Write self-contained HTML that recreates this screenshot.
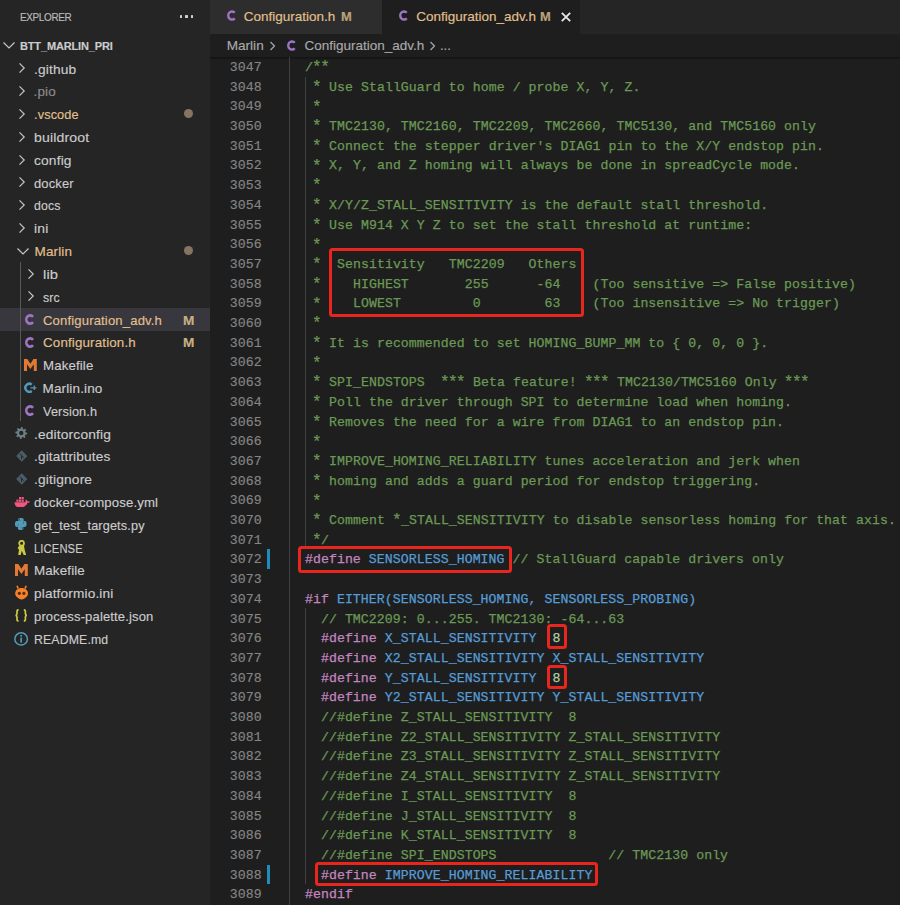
<!DOCTYPE html>
<html><head><meta charset="utf-8"><style>
*{margin:0;padding:0;box-sizing:border-box}
html,body{width:900px;height:905px;overflow:hidden;background:#1e1e1e}
body{position:relative;font-family:"Liberation Sans",sans-serif;-webkit-text-stroke:0.15px}
.ab{position:absolute}
#side{position:absolute;left:0;top:0;width:210px;height:905px;background:#252526}
.row{position:absolute;left:0;width:210px;height:22.81px;line-height:22.81px;font-size:13px;color:#cccccc;white-space:nowrap}
.row .t{position:absolute;top:1.7px;letter-spacing:0.15px;font-size:13.5px}
.chev{position:absolute;width:16px;height:16px}
.ln{position:absolute;left:210.7px;width:51px;text-align:right;font-family:"Liberation Mono",monospace;font-size:13.2px;letter-spacing:0.07px;color:#858585;height:19.7px;line-height:19.7px;white-space:pre}
.cl{position:absolute;left:289px;font-family:"Liberation Mono",monospace;font-size:13.2px;letter-spacing:0.07px;height:19.7px;line-height:19.7px;white-space:pre;color:#d4d4d4;-webkit-text-stroke:0.25px}
.c{color:#6a9955}.st{font-size:16px;letter-spacing:-1.53px;position:relative;left:-0.9px;top:1.3px}.k{color:#c586c0}.m{color:#569cd6}.n{color:#b5cea8}
.box{position:absolute;border:3.8px solid #e8261e;border-radius:3.5px}
.guide{position:absolute;width:1px;background:#404040}
</style></head><body>

<div id="side">
<div class="ab" style="left:20px;top:9px;font-size:11px;color:#bbbbbb;letter-spacing:-0.4px;line-height:16px;transform:scaleX(0.906);transform-origin:0 0">EXPLORER</div>
<div class="ab" style="left:179.8px;top:15.1px;width:2.6px;height:2.8px;border-radius:0.6px;background:#d0d0d0"></div>
<div class="ab" style="left:185.2px;top:15.1px;width:2.6px;height:2.8px;border-radius:0.6px;background:#d0d0d0"></div>
<div class="ab" style="left:190.6px;top:15.1px;width:2.6px;height:2.8px;border-radius:0.6px;background:#d0d0d0"></div>
<div class="row" style="top:34.1px;">
<svg class="chev" style="left:1px;top:3.4px" viewBox="0 0 16 16"><path d="M2.5 5.5 L8 11 L13.5 5.5" fill="none" stroke="#c5c5c5" stroke-width="1.2"/></svg>
<div class="t" style="left:20px;top:0.7px;font-weight:bold;font-size:11px;letter-spacing:-0.15px">BTT_MARLIN_PRI</div>
</div>
<div class="row" style="top:56.91px;">
<svg class="chev" style="left:14.3px;top:3.4px" viewBox="0 0 16 16"><path d="M5.5 3.3 L10.2 8 L5.5 12.7" fill="none" stroke="#c5c5c5" stroke-width="1.2"/></svg>
<div class="t" style="left:33.5px;color:#cccccc;transform:scaleX(1.017);transform-origin:0 0;">.github</div>
</div>
<div class="row" style="top:79.72px;">
<svg class="chev" style="left:14.3px;top:3.4px" viewBox="0 0 16 16"><path d="M5.5 3.3 L10.2 8 L5.5 12.7" fill="none" stroke="#c5c5c5" stroke-width="1.2"/></svg>
<div class="t" style="left:33.5px;color:#8c8c8c;transform:scaleX(1);transform-origin:0 0;">.pio</div>
</div>
<div class="row" style="top:102.53px;">
<svg class="chev" style="left:14.3px;top:3.4px" viewBox="0 0 16 16"><path d="M5.5 3.3 L10.2 8 L5.5 12.7" fill="none" stroke="#c5c5c5" stroke-width="1.2"/></svg>
<div class="t" style="left:33.5px;color:#e2c08d;transform:scaleX(0.94);transform-origin:0 0;">.vscode</div>
<div class="ab" style="left:183.8px;top:6.9px;width:9px;height:9px;border-radius:50%;background:#857560"></div>
</div>
<div class="row" style="top:125.34px;">
<svg class="chev" style="left:14.3px;top:3.4px" viewBox="0 0 16 16"><path d="M5.5 3.3 L10.2 8 L5.5 12.7" fill="none" stroke="#c5c5c5" stroke-width="1.2"/></svg>
<div class="t" style="left:33.5px;color:#cccccc;transform:scaleX(1.04);transform-origin:0 0;">buildroot</div>
</div>
<div class="row" style="top:148.15px;">
<svg class="chev" style="left:14.3px;top:3.4px" viewBox="0 0 16 16"><path d="M5.5 3.3 L10.2 8 L5.5 12.7" fill="none" stroke="#c5c5c5" stroke-width="1.2"/></svg>
<div class="t" style="left:33.5px;color:#cccccc;transform:scaleX(1.02);transform-origin:0 0;">config</div>
</div>
<div class="row" style="top:170.96px;">
<svg class="chev" style="left:14.3px;top:3.4px" viewBox="0 0 16 16"><path d="M5.5 3.3 L10.2 8 L5.5 12.7" fill="none" stroke="#c5c5c5" stroke-width="1.2"/></svg>
<div class="t" style="left:33.5px;color:#cccccc;transform:scaleX(0.96);transform-origin:0 0;">docker</div>
</div>
<div class="row" style="top:193.77px;">
<svg class="chev" style="left:14.3px;top:3.4px" viewBox="0 0 16 16"><path d="M5.5 3.3 L10.2 8 L5.5 12.7" fill="none" stroke="#c5c5c5" stroke-width="1.2"/></svg>
<div class="t" style="left:33.5px;color:#cccccc;transform:scaleX(0.91);transform-origin:0 0;">docs</div>
</div>
<div class="row" style="top:216.58px;">
<svg class="chev" style="left:14.3px;top:3.4px" viewBox="0 0 16 16"><path d="M5.5 3.3 L10.2 8 L5.5 12.7" fill="none" stroke="#c5c5c5" stroke-width="1.2"/></svg>
<div class="t" style="left:33.5px;color:#cccccc;transform:scaleX(1.03);transform-origin:0 0;">ini</div>
</div>
<div class="row" style="top:239.39px;">
<svg class="chev" style="left:15px;top:3.4px" viewBox="0 0 16 16"><path d="M2.5 5.5 L8 11 L13.5 5.5" fill="none" stroke="#c5c5c5" stroke-width="1.2"/></svg>
<div class="t" style="left:34.5px;color:#e2c08d;transform:scaleX(1);transform-origin:0 0;">Marlin</div>
<div class="ab" style="left:183.8px;top:6.9px;width:9px;height:9px;border-radius:50%;background:#857560"></div>
</div>
<div class="row" style="top:262.2px;">
<svg class="chev" style="left:23.3px;top:3.4px" viewBox="0 0 16 16"><path d="M5.5 3.3 L10.2 8 L5.5 12.7" fill="none" stroke="#c5c5c5" stroke-width="1.2"/></svg>
<div class="t" style="left:42.5px;color:#cccccc;transform:scaleX(1.09);transform-origin:0 0;">lib</div>
</div>
<div class="row" style="top:285.01px;">
<svg class="chev" style="left:23.3px;top:3.4px" viewBox="0 0 16 16"><path d="M5.5 3.3 L10.2 8 L5.5 12.7" fill="none" stroke="#c5c5c5" stroke-width="1.2"/></svg>
<div class="t" style="left:42.5px;color:#cccccc;transform:scaleX(0.91);transform-origin:0 0;">src</div>
</div>
<div class="row" style="top:307.82px;background:#37373d;">
<svg class="ab" style="left:25.2px;top:6.1px" width="10" height="11" viewBox="0 0 10 11"><path d="M8 2.86 A3.8 4.1 0 1 0 8 8.14" fill="none" stroke="#a074c4" stroke-width="2.6"/></svg>
<div class="t" style="left:42.5px;color:#e2c08d;transform:scaleX(0.97);transform-origin:0 0;">Configuration_adv.h</div>
<div class="t" style="left:182.8px;color:#c9ae80;font-size:12.4px;font-weight:bold;letter-spacing:0;transform:scaleX(1.1);transform-origin:0 0">M</div>
</div>
<div class="row" style="top:330.63px;">
<svg class="ab" style="left:25.2px;top:6.1px" width="10" height="11" viewBox="0 0 10 11"><path d="M8 2.86 A3.8 4.1 0 1 0 8 8.14" fill="none" stroke="#a074c4" stroke-width="2.6"/></svg>
<div class="t" style="left:42.5px;color:#e2c08d;transform:scaleX(0.99);transform-origin:0 0;">Configuration.h</div>
<div class="t" style="left:182.8px;color:#c9ae80;font-size:12.4px;font-weight:bold;letter-spacing:0;transform:scaleX(1.1);transform-origin:0 0">M</div>
</div>
<div class="row" style="top:353.44px;">
<svg class="ab" style="left:23.8px;top:5.1px" width="12.8" height="12" viewBox="0 0 12.8 12"><polygon fill="#e37933" points="0,12 0,0 3.3,0 6.4,4.8 9.5,0 12.8,0 12.8,12 9.8,12 9.8,5.3 6.4,10 3,5.3 3,12"/></svg>
<div class="t" style="left:42.5px;color:#cccccc;transform:scaleX(0.98);transform-origin:0 0;">Makefile</div>
</div>
<div class="row" style="top:376.25px;">
<svg class="ab" style="left:24px;top:5.4px" width="12.7" height="11.6" viewBox="0 0 12.7 11.6"><path d="M7.8 2.6 A4 4 0 1 0 7.8 9" fill="none" stroke="#519aba" stroke-width="2.4"/><path d="M6.5 5.8H12.5M10.3 3.6V8" stroke="#519aba" stroke-width="1.3"/></svg>
<div class="t" style="left:42.5px;color:#cccccc;transform:scaleX(1);transform-origin:0 0;">Marlin.ino</div>
</div>
<div class="row" style="top:399.06px;">
<svg class="ab" style="left:25.2px;top:6.1px" width="10" height="11" viewBox="0 0 10 11"><path d="M8 2.86 A3.8 4.1 0 1 0 8 8.14" fill="none" stroke="#a074c4" stroke-width="2.6"/></svg>
<div class="t" style="left:42.5px;color:#cccccc;transform:scaleX(0.94);transform-origin:0 0;">Version.h</div>
</div>
<div class="row" style="top:421.87px;">
<svg class="ab" style="left:15.2px;top:5.3px" width="12.5" height="12" viewBox="0 0 12.5 12"><path fill="#6d8086" d="M6.25,0.00 L7.42,0.12 L7.90,2.03 L8.64,2.42 L10.49,1.76 L11.24,2.67 L10.22,4.35 L10.47,5.16 L12.25,6.00 L12.13,7.17 L10.22,7.65 L9.83,8.39 L10.49,10.24 L9.58,10.99 L7.90,9.97 L7.09,10.22 L6.25,12.00 L5.08,11.88 L4.60,9.97 L3.86,9.58 L2.01,10.24 L1.26,9.33 L2.28,7.65 L2.03,6.84 L0.25,6.00 L0.37,4.83 L2.28,4.35 L2.67,3.61 L2.01,1.76 L2.92,1.01 L4.60,2.03 L5.41,1.78Z"/><circle cx="6.25" cy="6" r="2.2" fill="#252526"/></svg>
<div class="t" style="left:34px;color:#cccccc;transform:scaleX(1.02);transform-origin:0 0;">.editorconfig</div>
</div>
<div class="row" style="top:444.68px;">
<svg class="ab" style="left:15.5px;top:5.4px" width="11.5" height="12" viewBox="0 0 11.5 12"><path fill="#4a5d67" d="M5.75 0.2L11.3 6 5.75 11.8 0.2 6z"/><path d="M4 3.8L7.6 7.6M5.6 5.3V9.2" stroke="#252526" stroke-width="1" fill="none"/></svg>
<div class="t" style="left:34px;color:#cccccc;transform:scaleX(1.01);transform-origin:0 0;">.gitattributes</div>
</div>
<div class="row" style="top:467.49px;">
<svg class="ab" style="left:15.5px;top:5.4px" width="11.5" height="12" viewBox="0 0 11.5 12"><path fill="#4a5d67" d="M5.75 0.2L11.3 6 5.75 11.8 0.2 6z"/><path d="M4 3.8L7.6 7.6M5.6 5.3V9.2" stroke="#252526" stroke-width="1" fill="none"/></svg>
<div class="t" style="left:34px;color:#cccccc;transform:scaleX(1.02);transform-origin:0 0;">.gitignore</div>
</div>
<div class="row" style="top:490.3px;">
<svg class="ab" style="left:13.5px;top:6.3px" width="16.2" height="10.8" viewBox="0 0 16.2 10.8"><path fill="#f0567e" d="M0.5 5.2H11.2C11.6 4.2 11.8 3.2 11.6 2.2 12.7 2.6 13.3 3.6 13.4 4.5 14.3 4 15.4 4.1 16 4.5 15.6 5.4 14.6 5.9 13.5 5.8 12.6 8.8 9.8 10.6 5.8 10.6 2.6 10.6 0.6 8.6 0.5 5.2Z"/><rect x="2.4" y="2.6" width="2.2" height="2.2" fill="#f0567e"/><rect x="5" y="2.6" width="2.2" height="2.2" fill="#f0567e"/><rect x="7.6" y="2.6" width="2.2" height="2.2" fill="#f0567e"/><rect x="5" y="0" width="2.2" height="2.2" fill="#f0567e"/><rect x="7.6" y="0" width="2.2" height="2.2" fill="#f0567e"/></svg>
<div class="t" style="left:34px;color:#cccccc;transform:scaleX(0.976);transform-origin:0 0;">docker-compose.yml</div>
</div>
<div class="row" style="top:513.11px;">
<svg class="ab" style="left:15.4px;top:5.1px" width="11.6" height="12" viewBox="0 0 11.6 12"><path fill="#519aba" d="M5.8 0C3 0 3.2 1.3 3.2 1.3V2.7H5.9V3.1H2.1S0 2.9 0 6 1.6 9 1.6 9H2.8V7.5S2.7 5.9 4.4 5.9H7.2S8.7 5.9 8.7 4.4V1.6S9 0 5.8 0ZM4.3 .8A.5.5 0 1 1 4.3 1.8.5.5 0 0 1 4.3.8Z"/><path fill="#519aba" d="M5.8 12C8.6 12 8.4 10.7 8.4 10.7V9.3H5.7V8.9H9.5S11.6 9.1 11.6 6 10 3 10 3H8.8V4.5S8.9 6.1 7.2 6.1H4.4S2.9 6.1 2.9 7.6V10.4S2.6 12 5.8 12ZM7.3 11.2A.5.5 0 1 1 7.3 10.2.5.5 0 0 1 7.3 11.2Z"/></svg>
<div class="t" style="left:34px;color:#cccccc;transform:scaleX(0.94);transform-origin:0 0;">get_test_targets.py</div>
</div>
<div class="row" style="top:535.92px;">
<svg class="ab" style="left:17px;top:3.6px" width="9.2" height="15.5" viewBox="0 0 9.2 15.5"><circle cx="4.6" cy="3.2" r="2.4" fill="none" stroke="#cbcb41" stroke-width="1.8"/><path fill="#cbcb41" d="M2.2 5.6H7L7.6 9.5 9.2 15.3H6.8L4.8 10.8 3.6 15.3H1.2L2 9.5 0.6 8.2Z"/></svg>
<div class="t" style="left:34px;color:#cccccc;transform:scaleX(0.83);transform-origin:0 0;">LICENSE</div>
</div>
<div class="row" style="top:558.73px;">
<svg class="ab" style="left:15.3px;top:5.1px" width="12.8" height="12" viewBox="0 0 12.8 12"><polygon fill="#e37933" points="0,12 0,0 3.3,0 6.4,4.8 9.5,0 12.8,0 12.8,12 9.8,12 9.8,5.3 6.4,10 3,5.3 3,12"/></svg>
<div class="t" style="left:34px;color:#cccccc;transform:scaleX(0.99);transform-origin:0 0;">Makefile</div>
</div>
<div class="row" style="top:581.54px;">
<svg class="ab" style="left:15.4px;top:3.9px" width="13.2" height="14.7" viewBox="0 0 13.2 14.7"><path fill="#f5822a" d="M6.6 3C10.2 3 13 5.3 13 8.4 13 11.2 10 13.6 6.6 14.6 3.2 13.6 0.2 11.2 0.2 8.4 0.2 5.3 3 3 6.6 3Z"/><path d="M3.2 3.6L2 0.8M10 3.6L11.2 0.8" stroke="#f5822a" stroke-width="1.6"/><circle cx="4.3" cy="8.3" r="1.6" fill="#5a2a10"/><circle cx="8.9" cy="8.3" r="1.6" fill="#5a2a10"/></svg>
<div class="t" style="left:34px;color:#cccccc;transform:scaleX(1.01);transform-origin:0 0;">platformio.ini</div>
</div>
<div class="row" style="top:604.35px;">
<svg class="ab" style="left:15.4px;top:4.7px" width="12.4" height="12.8" viewBox="0 0 12.4 12.8"><path d="M3.6 0.8C2.2 0.8 2 1.5 2 2.6V4.8C2 5.8 1.6 6.2 0.6 6.4 1.6 6.6 2 7 2 8V10.2C2 11.3 2.2 12 3.6 12M8.8 0.8C10.2 0.8 10.4 1.5 10.4 2.6V4.8C10.4 5.8 10.8 6.2 11.8 6.4 10.8 6.6 10.4 7 10.4 8V10.2C10.4 11.3 10.2 12 8.8 12" fill="none" stroke="#cbcb41" stroke-width="1.7"/></svg>
<div class="t" style="left:34px;color:#cccccc;transform:scaleX(0.965);transform-origin:0 0;">process-palette.json</div>
</div>
<div class="row" style="top:627.16px;">
<svg class="ab" style="left:14.3px;top:4.7px" width="14.3" height="13.9" viewBox="0 0 14.3 13.9"><ellipse cx="7.15" cy="6.95" rx="6.3" ry="6.1" fill="none" stroke="#519aba" stroke-width="1.5"/><rect x="6.3" y="5.6" width="1.7" height="5" fill="#519aba"/><rect x="6.3" y="3" width="1.7" height="1.6" fill="#519aba"/></svg>
<div class="t" style="left:34px;color:#cccccc;transform:scaleX(0.91);transform-origin:0 0;">README.md</div>
</div>
<div class="guide" style="left:20px;top:262.2px;height:159px;background:#585858"></div>
</div>
<div class="ab" style="left:210px;top:0;width:690px;height:34px;background:#252526"></div>
<div class="ab" style="left:210px;top:0;width:172px;height:34px;background:#2d2d2d"></div>
<div class="ab" style="left:382px;top:0;width:198px;height:34px;background:#1e1e1e"></div>
<svg class="ab" style="left:226.7px;top:9.9px" width="9.5" height="11" viewBox="0 0 9.5 11"><path d="M7.66 2.86 A3.6 4.1 0 1 0 7.66 8.14" fill="none" stroke="#a074c4" stroke-width="2.5"/></svg>
<div class="ab" style="left:243.8px;top:8px;font-size:13.5px;color:#e2c08d;line-height:18px;white-space:nowrap">Configuration.h</div>
<div class="ab" style="left:340.8px;top:7.6px;font-size:12px;font-weight:bold;color:#bba37a;line-height:18px;transform:scaleX(1.08);transform-origin:0 0">M</div>
<svg class="ab" style="left:398.6px;top:9.9px" width="9.5" height="11" viewBox="0 0 9.5 11"><path d="M7.66 2.86 A3.6 4.1 0 1 0 7.66 8.14" fill="none" stroke="#a074c4" stroke-width="2.5"/></svg>
<div class="ab" style="left:416.2px;top:8px;font-size:13.5px;color:#e2c08d;line-height:18px;white-space:nowrap">Configuration_adv.h</div>
<div class="ab" style="left:540.3px;top:7.6px;font-size:12px;font-weight:bold;color:#bba37a;line-height:18px;transform:scaleX(1.08);transform-origin:0 0">M</div>
<svg class="ab" style="left:560.5px;top:11.5px" width="10" height="10" viewBox="0 0 10 10"><path d="M0.8 0.8L9.2 9.2M9.2 0.8L0.8 9.2" stroke="#e8e8e8" stroke-width="1.8"/></svg>
<div class="ab" style="left:226.7px;top:37px;font-size:13.6px;color:#a9a9a9;line-height:18px;white-space:nowrap">Marlin</div>
<svg class="ab" style="left:266.5px;top:39px" width="12" height="14" viewBox="0 0 12 14"><path d="M3.5 3L7.5 7 3.5 11" fill="none" stroke="#a9a9a9" stroke-width="1.2"/></svg>
<svg class="ab" style="left:286.6px;top:40.4px" width="9.5" height="11" viewBox="0 0 9.5 11"><path d="M7.66 2.86 A3.6 4.1 0 1 0 7.66 8.14" fill="none" stroke="#a074c4" stroke-width="2.5"/></svg>
<div class="ab" style="left:304.4px;top:37px;font-size:13.5px;color:#a9a9a9;line-height:18px;white-space:nowrap">Configuration_adv.h</div>
<svg class="ab" style="left:427px;top:39px" width="12" height="14" viewBox="0 0 12 14"><path d="M3.5 3L7.5 7 3.5 11" fill="none" stroke="#a9a9a9" stroke-width="1.2"/></svg>
<div class="ab" style="left:440px;top:37px;font-size:13px;color:#a9a9a9;line-height:18px">...</div>
<div class="ab" style="left:210px;top:57px;width:690px;height:3px;background:linear-gradient(#121212,rgba(30,30,30,0))"></div>
<div class="guide" style="left:289px;top:57px;height:848px"></div>
<div class="ln" style="top:57.95px">3047</div>
<div class="cl" style="top:57.95px">  <span class="c">/<span class="st">*</span><span class="st">*</span></span></div>
<div class="ln" style="top:77.65px">3048</div>
<div class="cl" style="top:77.65px"><span class="c">   <span class="st">*</span> Use StallGuard to home / probe X, Y, Z.</span></div>
<div class="ln" style="top:97.35px">3049</div>
<div class="cl" style="top:97.35px"><span class="c">   <span class="st">*</span></span></div>
<div class="ln" style="top:117.05px">3050</div>
<div class="cl" style="top:117.05px"><span class="c">   <span class="st">*</span> TMC2130, TMC2160, TMC2209, TMC2660, TMC5130, and TMC5160 only</span></div>
<div class="ln" style="top:136.75px">3051</div>
<div class="cl" style="top:136.75px"><span class="c">   <span class="st">*</span> Connect the stepper driver&#x27;s DIAG1 pin to the X/Y endstop pin.</span></div>
<div class="ln" style="top:156.45px">3052</div>
<div class="cl" style="top:156.45px"><span class="c">   <span class="st">*</span> X, Y, and Z homing will always be done in spreadCycle mode.</span></div>
<div class="ln" style="top:176.15px">3053</div>
<div class="cl" style="top:176.15px"><span class="c">   <span class="st">*</span></span></div>
<div class="ln" style="top:195.85px">3054</div>
<div class="cl" style="top:195.85px"><span class="c">   <span class="st">*</span> X/Y/Z_STALL_SENSITIVITY is the default stall threshold.</span></div>
<div class="ln" style="top:215.55px">3055</div>
<div class="cl" style="top:215.55px"><span class="c">   <span class="st">*</span> Use M914 X Y Z to set the stall threshold at runtime:</span></div>
<div class="ln" style="top:235.25px">3056</div>
<div class="cl" style="top:235.25px"><span class="c">   <span class="st">*</span></span></div>
<div class="ln" style="top:254.95px">3057</div>
<div class="cl" style="top:254.95px"><span class="c">   <span class="st">*</span>  Sensitivity   TMC2209   Others</span></div>
<div class="ln" style="top:274.65px">3058</div>
<div class="cl" style="top:274.65px"><span class="c">   <span class="st">*</span>    HIGHEST       255      -64    (Too sensitive =&gt; False positive)</span></div>
<div class="ln" style="top:294.35px">3059</div>
<div class="cl" style="top:294.35px"><span class="c">   <span class="st">*</span>    LOWEST         0        63    (Too insensitive =&gt; No trigger)</span></div>
<div class="ln" style="top:314.05px">3060</div>
<div class="cl" style="top:314.05px"><span class="c">   <span class="st">*</span></span></div>
<div class="ln" style="top:333.75px">3061</div>
<div class="cl" style="top:333.75px"><span class="c">   <span class="st">*</span> It is recommended to set HOMING_BUMP_MM to { 0, 0, 0 }.</span></div>
<div class="ln" style="top:353.45px">3062</div>
<div class="cl" style="top:353.45px"><span class="c">   <span class="st">*</span></span></div>
<div class="ln" style="top:373.15px">3063</div>
<div class="cl" style="top:373.15px"><span class="c">   <span class="st">*</span> SPI_ENDSTOPS  <span class="st">*</span><span class="st">*</span><span class="st">*</span> Beta feature! <span class="st">*</span><span class="st">*</span><span class="st">*</span> TMC2130/TMC5160 Only <span class="st">*</span><span class="st">*</span><span class="st">*</span></span></div>
<div class="ln" style="top:392.85px">3064</div>
<div class="cl" style="top:392.85px"><span class="c">   <span class="st">*</span> Poll the driver through SPI to determine load when homing.</span></div>
<div class="ln" style="top:412.55px">3065</div>
<div class="cl" style="top:412.55px"><span class="c">   <span class="st">*</span> Removes the need for a wire from DIAG1 to an endstop pin.</span></div>
<div class="ln" style="top:432.25px">3066</div>
<div class="cl" style="top:432.25px"><span class="c">   <span class="st">*</span></span></div>
<div class="ln" style="top:451.95px">3067</div>
<div class="cl" style="top:451.95px"><span class="c">   <span class="st">*</span> IMPROVE_HOMING_RELIABILITY tunes acceleration and jerk when</span></div>
<div class="ln" style="top:471.65px">3068</div>
<div class="cl" style="top:471.65px"><span class="c">   <span class="st">*</span> homing and adds a guard period for endstop triggering.</span></div>
<div class="ln" style="top:491.35px">3069</div>
<div class="cl" style="top:491.35px"><span class="c">   <span class="st">*</span></span></div>
<div class="ln" style="top:511.05px">3070</div>
<div class="cl" style="top:511.05px"><span class="c">   <span class="st">*</span> Comment <span class="st">*</span>_STALL_SENSITIVITY to disable sensorless homing for that axis.</span></div>
<div class="ln" style="top:530.75px">3071</div>
<div class="cl" style="top:530.75px"><span class="c">   <span class="st">*</span>/</span></div>
<div class="ln" style="top:550.45px">3072</div>
<div class="cl" style="top:550.45px">  <span class="k">#define</span> <span class="m">SENSORLESS_HOMING</span> <span class="c">// StallGuard capable drivers only</span></div>
<div class="ln" style="top:570.15px">3073</div>
<div class="cl" style="top:570.15px"></div>
<div class="ln" style="top:589.85px">3074</div>
<div class="cl" style="top:589.85px">  <span class="k">#if</span> <span class="m">EITHER(SENSORLESS_HOMING, SENSORLESS_PROBING)</span></div>
<div class="ln" style="top:609.55px">3075</div>
<div class="cl" style="top:609.55px">    <span class="c">// TMC2209: 0...255. TMC2130: -64...63</span></div>
<div class="ln" style="top:629.25px">3076</div>
<div class="cl" style="top:629.25px">    <span class="k">#define</span> <span class="m">X_STALL_SENSITIVITY</span>  <span class="n">8</span></div>
<div class="ln" style="top:648.95px">3077</div>
<div class="cl" style="top:648.95px">    <span class="k">#define</span> <span class="m">X2_STALL_SENSITIVITY</span> <span class="m">X_STALL_SENSITIVITY</span></div>
<div class="ln" style="top:668.65px">3078</div>
<div class="cl" style="top:668.65px">    <span class="k">#define</span> <span class="m">Y_STALL_SENSITIVITY</span>  <span class="n">8</span></div>
<div class="ln" style="top:688.35px">3079</div>
<div class="cl" style="top:688.35px">    <span class="k">#define</span> <span class="m">Y2_STALL_SENSITIVITY</span> <span class="m">Y_STALL_SENSITIVITY</span></div>
<div class="ln" style="top:708.05px">3080</div>
<div class="cl" style="top:708.05px"><span class="c">    //#define Z_STALL_SENSITIVITY  8</span></div>
<div class="ln" style="top:727.75px">3081</div>
<div class="cl" style="top:727.75px"><span class="c">    //#define Z2_STALL_SENSITIVITY Z_STALL_SENSITIVITY</span></div>
<div class="ln" style="top:747.45px">3082</div>
<div class="cl" style="top:747.45px"><span class="c">    //#define Z3_STALL_SENSITIVITY Z_STALL_SENSITIVITY</span></div>
<div class="ln" style="top:767.15px">3083</div>
<div class="cl" style="top:767.15px"><span class="c">    //#define Z4_STALL_SENSITIVITY Z_STALL_SENSITIVITY</span></div>
<div class="ln" style="top:786.85px">3084</div>
<div class="cl" style="top:786.85px"><span class="c">    //#define I_STALL_SENSITIVITY  8</span></div>
<div class="ln" style="top:806.55px">3085</div>
<div class="cl" style="top:806.55px"><span class="c">    //#define J_STALL_SENSITIVITY  8</span></div>
<div class="ln" style="top:826.25px">3086</div>
<div class="cl" style="top:826.25px"><span class="c">    //#define K_STALL_SENSITIVITY  8</span></div>
<div class="ln" style="top:845.95px">3087</div>
<div class="cl" style="top:845.95px"><span class="c">    //#define SPI_ENDSTOPS              // TMC2130 only</span></div>
<div class="ln" style="top:865.65px">3088</div>
<div class="cl" style="top:865.65px">    <span class="k">#define</span> <span class="m">IMPROVE_HOMING_RELIABILITY</span></div>
<div class="ln" style="top:885.35px">3089</div>
<div class="cl" style="top:885.35px">  <span class="k">#endif</span></div>
<div class="guide" style="left:305px;top:76.55px;height:472.8px"></div>
<div class="guide" style="left:305px;top:608.45px;height:275.8px"></div>
<div class="ab" style="left:267.2px;top:549.35px;width:3.3px;height:19.7px;background:#1f8cba"></div>
<div class="ab" style="left:267.2px;top:864.55px;width:3.3px;height:19.7px;background:#1f8cba"></div>
<div class="box" style="left:329px;top:247.6px;width:255px;height:69.1px"></div>
<div class="box" style="left:297.5px;top:546px;width:214px;height:26.5px"></div>
<div class="box" style="left:547.2px;top:624.3px;width:19.9px;height:24.7px"></div>
<div class="box" style="left:547.2px;top:664.5px;width:19.9px;height:24.7px"></div>
<div class="box" style="left:315px;top:862px;width:283px;height:24px"></div>
</body></html>
